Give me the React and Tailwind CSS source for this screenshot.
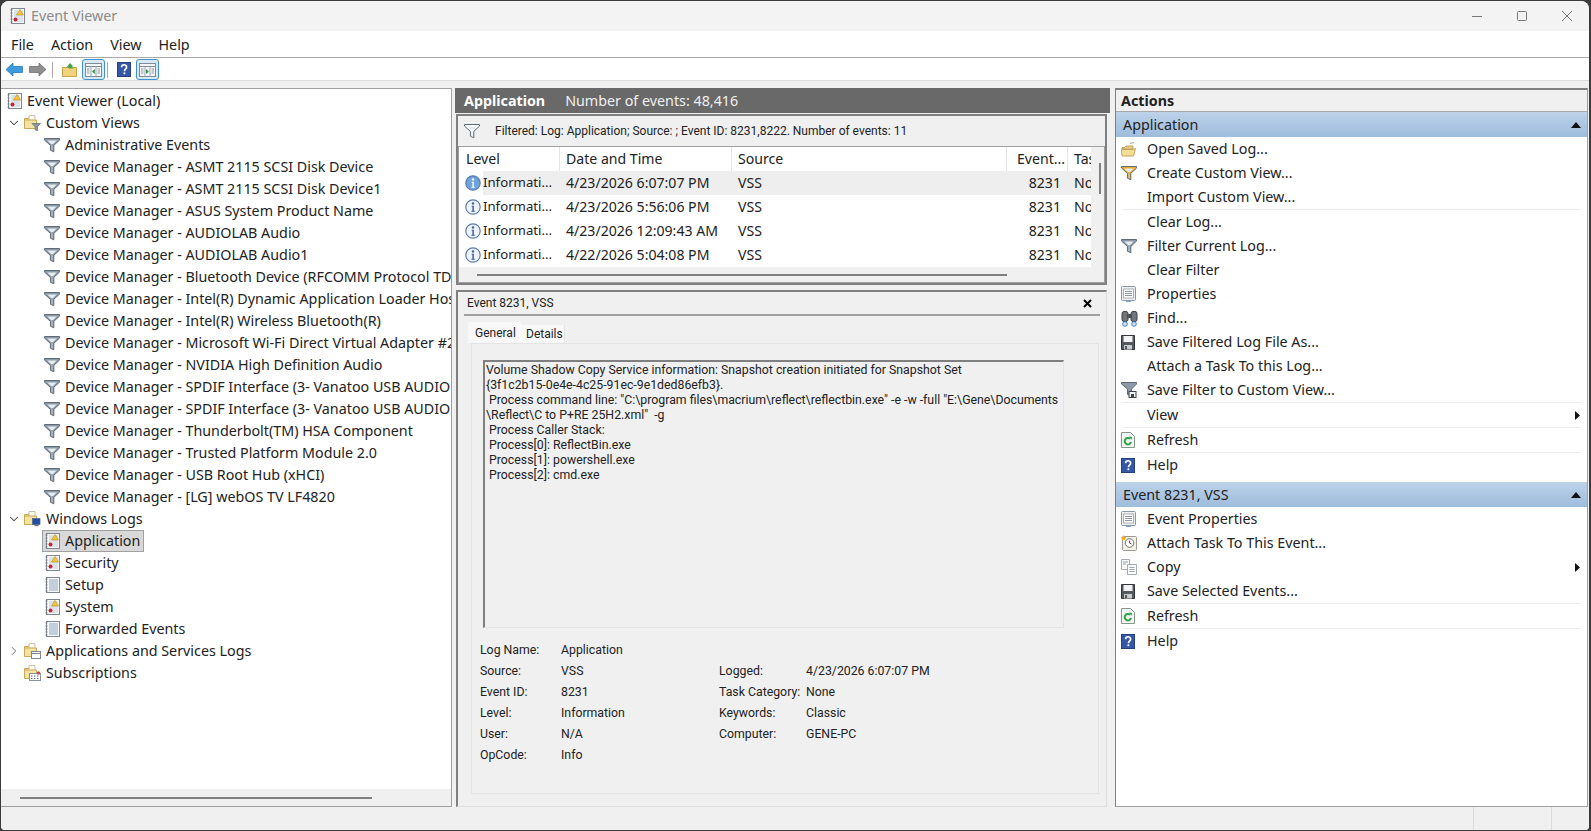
import { ChevronDown, ChevronRight } from 'lucide-react';

const FilterIcon = ({ tint = '#8a9aa8' }) => (
  <svg width="16" height="16" viewBox="0 0 16 16" className="shrink-0">
    <path d="M.5 1.5h15v1.6L9.8 8.4v6.4l-3.4-1.6V8.4L.5 3.1z" fill={tint} stroke="#5f6b75" strokeWidth="1" />
    <path d="M3.2 3.4h9.6L8.8 7.2H7.2z" fill="#e8edf1" />
    <path d="M7.6 8.6h.8v4.6h-.8z" fill="#cdd5db" />
  </svg>
);

const LogIcon = ({ plain = false }) => (
  <svg width="15" height="16" viewBox="0 0 15 16" className="shrink-0">
    <rect x="1.5" y=".5" width="13" height="15" fill="#f7f8fa" stroke="#7e8792" />
    <path d="M.5 2h2M.5 5h2M.5 8h2M.5 11h2M.5 14h2" stroke="#6f7782" />
    <path d="M4 3h9M4 5h9M4 7h9M4 9h9M4 11h9M4 13h9" stroke={plain ? '#8fa5bd' : '#c3ccd6'} />
    {!plain && (
      <>
        <path d="M10 1.5l3.5 5.5h-7z" fill="#f2c63d" stroke="#b98a13" strokeWidth=".6" />
        <circle cx="5.5" cy="11.5" r="2" fill="#c2263c" />
      </>
    )}
  </svg>
);

const FolderIcon = ({ badge }) => (
  <svg width="17" height="16" viewBox="0 0 17 16" className="shrink-0">
    <path d="M.5 3.5h4l1-2h5v11H.5z" fill="#f3d98a" stroke="#c8a955" />
    <path d="M5 .5h6v6H5z" fill="#fdfbf2" stroke="#c9c3ad" />
    <path d="M.5 5h12v8.5H.5z" fill="#f6e2a0" stroke="#c8a955" />
    {badge === 'filter' && <path d="M8 8.5h8.5l-3 3.2v4l-2.4-1v-3z" fill="#8b98a3" stroke="#5d6872" strokeWidth=".7" />}
    {badge === 'monitor' && (
      <>
        <rect x="8.5" y="7.5" width="7.5" height="6" fill="#1f4fa8" stroke="#4c5f85" strokeWidth=".7" />
        <path d="M10.5 14.5h4" stroke="#6a7890" strokeWidth="1.4" />
      </>
    )}
    {badge === 'window' && (
      <>
        <rect x="7.5" y="8.5" width="9" height="7" fill="#fff" stroke="#7d8791" />
        <path d="M7.5 10.5h9" stroke="#7d8791" />
      </>
    )}
    {badge === 'calendar' && (
      <>
        <rect x="5.5" y="8.5" width="11" height="7" fill="#fff" stroke="#8a929b" />
        <path d="M7 11h1.4M10 11h1.4M13 11h1.4M7 13.5h1.4M10 13.5h1.4M13 13.5h1.4" stroke="#5a6f8c" />
        <circle cx="14.5" cy="8" r="1.7" fill="#d0423f" />
      </>
    )}
  </svg>
);

const HelpIcon = () => (
  <svg width="14" height="15" viewBox="0 0 14 15" className="shrink-0">
    <rect x=".5" y=".5" width="13" height="14" fill="#3557a8" stroke="#25407f" />
    <path d="M4.6 5.2c0-3.2 5-3.2 5 0 0 1.8-2.2 2-2.2 4" fill="none" stroke="#fff" strokeWidth="1.6" />
    <rect x="6.5" y="10.4" width="1.8" height="1.8" fill="#fff" />
  </svg>
);

const RefreshIcon = () => (
  <svg width="14" height="16" viewBox="0 0 14 16" className="shrink-0">
    <path d="M.5.5h9l4 4v11H.5z" fill="#f5f7f5" stroke="#8a948c" />
    <path d="M10 10a3.2 3.2 0 1 1-1-3.2" fill="none" stroke="#2ca243" strokeWidth="2" />
    <path d="M8 4.6l3 .4-.6 3z" fill="#2ca243" />
  </svg>
);

const PropertiesIcon = () => (
  <svg width="15" height="16" viewBox="0 0 15 16" className="shrink-0">
    <rect x=".5" y=".5" width="14" height="14" rx="1" fill="#eef1f4" stroke="#8c96a0" />
    <rect x="2.5" y="3" width="10" height="9" fill="#fff" stroke="#a8b0b8" />
    <path d="M4 5.5h7M4 7.5h7M4 9.5h7" stroke="#8e99a4" />
    <path d="M5 15.5h5" stroke="#7aa7cf" />
  </svg>
);

const BinocularsIcon = () => (
  <svg width="17" height="17" viewBox="0 0 17 17" className="shrink-0">
    <rect x="1" y="1.5" width="6" height="10" rx="2" fill="#70757b" stroke="#3c4046" />
    <rect x="10" y="1.5" width="6" height="10" rx="2" fill="#70757b" stroke="#3c4046" />
    <path d="M6 4h5v4H6z" fill="#4a4e54" />
    <circle cx="4" cy="14" r="2.3" fill="#cfe4f6" stroke="#3c82c4" />
    <circle cx="13" cy="14" r="2.3" fill="#cfe4f6" stroke="#3c82c4" />
  </svg>
);

const SaveIcon = () => (
  <svg width="14" height="15" viewBox="0 0 14 15" className="shrink-0">
    <path d="M.5.5h13v14H.5z" fill="#55595f" stroke="#34373b" />
    <rect x="2.5" y="1" width="9" height="6" fill="#f2f3f4" />
    <rect x="3" y="10" width="8" height="4.5" fill="#c9ccd0" />
    <rect x="4" y="11" width="2" height="3" fill="#55595f" />
  </svg>
);

const SaveFilterIcon = () => (
  <svg width="16" height="16" viewBox="0 0 16 16" className="shrink-0">
    <path d="M.5 .5h15v1.5l-5 5v7l-4-1.5V7L.5 2z" fill="#8a9aa8" stroke="#5f6b75" />
    <rect x="8" y="9.5" width="7" height="6" fill="#f3f4f5" stroke="#40444a" />
    <rect x="10" y="12" width="3" height="3" fill="#40444a" />
  </svg>
);

const OpenFolderIcon = () => (
  <svg width="15" height="15" viewBox="0 0 15 15" className="shrink-0">
    <path d="M9 1.5l4-1" stroke="#a9a59a" />
    <path d="M1 5.5h3l1-1.5h7v3H1z" fill="#e7cf8a" stroke="#bfa35c" />
    <path d="M.5 7.5h11.5l2.5-1-2 7.5H1z" fill="#f6dd95" stroke="#c3a55a" />
  </svg>
);

const TaskIcon = () => (
  <svg width="16" height="16" viewBox="0 0 16 16" className="shrink-0">
    <rect x="1.5" y="1.5" width="14" height="14" rx="1" fill="#f1f0ea" stroke="#9a9a94" />
    <circle cx="8.5" cy="8" r="4.3" fill="#fff" stroke="#77736a" />
    <path d="M8.5 5.5V8l2 1" fill="none" stroke="#55534c" />
    <path d="M2.5 0l1 2 2 .3-1.5 1.4.4 2L2.5 4.6.6 5.7l.4-2L-.5 2.3l2-.3z" fill="#efa926" />
  </svg>
);

const CopyIcon = () => (
  <svg width="16" height="16" viewBox="0 0 16 16" className="shrink-0">
    <path d="M.5.5h8v10h-8z" fill="#f7f8f9" stroke="#a4abb2" />
    <path d="M6.5 5.5h9v10h-9z" fill="#fff" stroke="#a4abb2" />
    <path d="M2 3h5M2 5h3M8.5 8.5h5M8.5 10.5h5M8.5 12.5h5" stroke="#9aa5b0" />
  </svg>
);

const InfoIcon = ({ active }) => (
  <svg width="16" height="16" viewBox="0 0 16 16" className="shrink-0">
    <circle cx="8" cy="8" r="7.2" fill={active ? '#6ea3dc' : '#eef3f9'} stroke="#5b7ba8" strokeWidth="1.2" />
    <circle cx="8" cy="4.4" r="1.2" fill={active ? '#fff' : '#2d5aa0'} />
    <path d="M6.6 6.8h2.2v5h1v1H6.4v-1h1V7.8h-.8z" fill={active ? '#fff' : '#2d5aa0'} />
  </svg>
);

const PaneButton = ({ side }) => (
  <div className="w-[23px] h-[21px] rounded-[3px] border border-[#3f90cf] bg-[#d7e8f7] flex items-center justify-center">
    <svg width="17" height="14" viewBox="0 0 17 14">
      <rect x=".5" y=".5" width="16" height="13" fill="#f4f6f8" stroke="#7f8a95" />
      <path d="M.5 3.5h16" stroke="#7f8a95" />
      <path d="M6 3.5v10M11 3.5v10" stroke="#a2abb4" />
      {side === 'left' && <path d="M9.8 6l-2.8 2.5 2.8 2.5z" fill="#2f8f45" />}
      {side === 'right' && <path d="M7 6l2.8 2.5L7 11z" fill="#2f8f45" />}
      <path d="M2 6h2.5M2 8h2.5M2 10h2.5M12.5 6H15M12.5 8H15M12.5 10H15" stroke="#8f9aa5" />
    </svg>
  </div>
);

const customViews = [
  'Administrative Events',
  'Device Manager - ASMT 2115 SCSI Disk Device',
  'Device Manager - ASMT 2115 SCSI Disk Device1',
  'Device Manager - ASUS System Product Name',
  'Device Manager - AUDIOLAB Audio',
  'Device Manager - AUDIOLAB Audio1',
  'Device Manager - Bluetooth Device (RFCOMM Protocol TDI)',
  'Device Manager - Intel(R) Dynamic Application Loader Host Interface',
  'Device Manager - Intel(R) Wireless Bluetooth(R)',
  'Device Manager - Microsoft Wi-Fi Direct Virtual Adapter #2',
  'Device Manager - NVIDIA High Definition Audio',
  'Device Manager - SPDIF Interface (3- Vanatoo USB AUDIO 2.0)',
  'Device Manager - SPDIF Interface (3- Vanatoo USB AUDIO 2.0)',
  'Device Manager - Thunderbolt(TM) HSA Component',
  'Device Manager - Trusted Platform Module 2.0',
  'Device Manager - USB Root Hub (xHCI)',
  'Device Manager - [LG] webOS TV LF4820',
];

const windowsLogs = [
  { name: 'Application', selected: true },
  { name: 'Security' },
  { name: 'Setup', plain: true },
  { name: 'System' },
  { name: 'Forwarded Events', plain: true },
];

const events = [
  ['4/23/2026 6:07:07 PM', true],
  ['4/23/2026 5:56:06 PM', false],
  ['4/23/2026 12:09:43 AM', false],
  ['4/22/2026 5:04:08 PM', false],
];

const eventMessage = [
  'Volume Shadow Copy Service information: Snapshot creation initiated for Snapshot Set',
  '{3f1c2b15-0e4e-4c25-91ec-9e1ded86efb3}.',
  ' Process command line: "C:\\program files\\macrium\\reflect\\reflectbin.exe" -e -w -full "E:\\Gene\\Documents',
  '\\Reflect\\C to P+RE 25H2.xml"  -g',
  ' Process Caller Stack:',
  ' Process[0]: ReflectBin.exe',
  ' Process[1]: powershell.exe',
  ' Process[2]: cmd.exe',
];

const fieldRows = [
  ['Log Name:', 'Application', '', ''],
  ['Source:', 'VSS', 'Logged:', '4/23/2026 6:07:07 PM'],
  ['Event ID:', '8231', 'Task Category:', 'None'],
  ['Level:', 'Information', 'Keywords:', 'Classic'],
  ['User:', 'N/A', 'Computer:', 'GENE-PC'],
  ['OpCode:', 'Info', '', ''],
];

const appActions = [
  { label: 'Open Saved Log...', icon: <OpenFolderIcon /> },
  { label: 'Create Custom View...', icon: <FilterIcon tint="#e9a92c" /> },
  { label: 'Import Custom View...', sep: 'thin' },
  { label: 'Clear Log...' },
  { label: 'Filter Current Log...', icon: <FilterIcon /> },
  { label: 'Clear Filter' },
  { label: 'Properties', icon: <PropertiesIcon /> },
  { label: 'Find...', icon: <BinocularsIcon /> },
  { label: 'Save Filtered Log File As...', icon: <SaveIcon /> },
  { label: 'Attach a Task To this Log...' },
  { label: 'Save Filter to Custom View...', icon: <SaveFilterIcon />, sep: 'thin' },
  { label: 'View', submenu: true, sep: 'thin' },
  { label: 'Refresh', icon: <RefreshIcon />, sep: 'thin' },
  { label: 'Help', icon: <HelpIcon /> },
];

const eventActions = [
  { label: 'Event Properties', icon: <PropertiesIcon /> },
  { label: 'Attach Task To This Event...', icon: <TaskIcon /> },
  { label: 'Copy', icon: <CopyIcon />, submenu: true },
  { label: 'Save Selected Events...', icon: <SaveIcon />, sep: 'thin' },
  { label: 'Refresh', icon: <RefreshIcon />, sep: 'thin' },
  { label: 'Help', icon: <HelpIcon /> },
];

function TreeRow({ indent, chevron, icon, children, selected }) {
  return (
    <div className={`h-[22px] flex items-center whitespace-nowrap ${indent}`}>
      {chevron !== undefined && (
        <span className="w-[20px] shrink-0 flex justify-center text-[#444]">
          {chevron === 'down' && <ChevronDown size={14} strokeWidth={1.8} />}
          {chevron === 'right' && <ChevronRight size={14} strokeWidth={1.8} className="text-[#888]" />}
        </span>
      )}
      <span className={selected ? 'flex items-center gap-[5px] h-[22px] pl-[2px] pr-[3px] ml-[-3px] bg-[#d9d9d9] border border-[#a0a0a0]' : 'flex items-center gap-[5px]'}>
        {icon}
        <span>{children}</span>
      </span>
    </div>
  );
}

function ActionGroup({ title, items }) {
  return (
    <>
      <div className="h-[25px] pl-[7px] pr-[6px] flex items-center justify-between bg-gradient-to-b from-[#bcd2e9] to-[#9ebcdc]">
        <span>{title}</span>
        <svg width="10" height="6" viewBox="0 0 10 6"><path d="M5 0l5 6H0z" fill="#111" /></svg>
      </div>
      {items.map((item) => (
        <div key={item.label}>
          <div className="h-[24px] flex items-center pl-[5px] pr-[7px]">
            <span className="w-[26px] flex items-center shrink-0">{item.icon}</span>
            <span className="flex-1">{item.label}</span>
            {item.submenu && <svg width="5" height="9" viewBox="0 0 5 9"><path d="M0 0l5 4.5L0 9z" fill="#111" /></svg>}
          </div>
          {item.sep === 'thin' && <div className="h-px mx-[6px] bg-[#ececec]" />}
        </div>
      ))}
    </>
  );
}

export default function App() {
  return (
    <div className="w-[1591px] h-[831px] bg-[#3b3b3b] pt-px pl-px pr-[2px] pb-px overflow-hidden">
      <div className="h-full flex flex-col rounded-t-[8px] rounded-b-[4px] overflow-hidden bg-[#f0f0f0] text-[#222] text-[14.3px] font-['Noto_Sans','Open_Sans',sans-serif]">
        {/* Title bar */}
        <div className="h-[30px] shrink-0 bg-[#f3f3f3] flex items-center pl-[9px] text-[#8a8a8a]">
          <LogIcon />
          <span className="ml-[6px]">Event Viewer</span>
          <div className="ml-auto flex items-center gap-[35px] pr-[17px] text-[#777]">
            <svg width="10" height="10" viewBox="0 0 10 10"><path d="M0 5.5h10" stroke="#777" /></svg>
            <svg width="10" height="10" viewBox="0 0 10 10"><rect x=".5" y=".5" width="9" height="9" rx="1" fill="none" stroke="#777" /></svg>
            <svg width="10" height="10" viewBox="0 0 10 10"><path d="M0 0l10 10M10 0L0 10" stroke="#777" /></svg>
          </div>
        </div>

        {/* Menu bar */}
        <div className="h-[27px] shrink-0 pt-px bg-white border-b border-[#a8a8a8] flex items-center pl-[10px] gap-[17px]">
          <span>File</span>
          <span>Action</span>
          <span>View</span>
          <span>Help</span>
        </div>

        {/* Toolbar */}
        <div className="h-[23px] shrink-0 pt-px bg-white border-b border-[#dcdcdc] flex items-center pl-[5px]">
          <svg width="17" height="13" viewBox="0 0 17 13"><path d="M7 0v3.5h9.5v6H7V13L0 6.5z" fill="#3d9be0" stroke="#1f6fb0" strokeWidth=".7" /></svg>
          <svg width="17" height="13" viewBox="0 0 17 13" className="ml-[6px]"><path d="M10 0v3.5H.5v6H10V13l7-6.5z" fill="#8f8f8f" stroke="#666" strokeWidth=".7" /></svg>
          <div className="w-px h-[16px] bg-[#a8a8a8] ml-[6px]" />
          <svg width="15" height="15" viewBox="0 0 15 15" className="ml-[9px]">
            <path d="M.5 5.5h14v9H.5z" fill="#f2d37c" stroke="#c6a24d" />
            <path d="M4 6l4-5 3 3-1 1 1.5 1.5H7L6 5z" fill="#46a54a" />
          </svg>
          <div className="ml-[5px]"><PaneButton side="left" /></div>
          <div className="w-px h-[16px] bg-[#a8a8a8] ml-[2px]" />
          <div className="ml-[9px]"><HelpIcon /></div>
          <div className="ml-[5px]"><PaneButton side="right" /></div>
        </div>

        {/* Panes */}
        <div className="flex-1 min-h-0 flex pt-[7px]">
          {/* Tree */}
          <div className="w-[451px] shrink-0 bg-white border-t border-r border-b border-[#a0a0a0] flex flex-col overflow-hidden">
            <div className="flex-1 pt-px overflow-hidden">
              <TreeRow indent="pl-[6px]" icon={<LogIcon />}>Event Viewer (Local)</TreeRow>
              <TreeRow indent="pl-[3px]" chevron="down" icon={<FolderIcon badge="filter" />}>Custom Views</TreeRow>
              {customViews.map((name, i) => (
                <TreeRow key={name + i} indent="pl-[43px]" icon={<FilterIcon />}>{name}</TreeRow>
              ))}
              <TreeRow indent="pl-[3px]" chevron="down" icon={<FolderIcon badge="monitor" />}>Windows Logs</TreeRow>
              {windowsLogs.map((log) => (
                <TreeRow key={log.name} indent="pl-[44px]" selected={log.selected} icon={<LogIcon plain={log.plain} />}>{log.name}</TreeRow>
              ))}
              <TreeRow indent="pl-[3px]" chevron="right" icon={<FolderIcon badge="window" />}>Applications and Services Logs</TreeRow>
              <TreeRow indent="pl-[3px]" chevron="" icon={<FolderIcon badge="calendar" />}>Subscriptions</TreeRow>
            </div>
            <div className="h-[17px] shrink-0 bg-[#f0f0f0] flex items-center pl-[19px]">
              <div className="w-[352px] h-[2px] bg-[#808080]" />
            </div>
          </div>

          {/* Centre */}
          <div className="w-[655px] shrink-0 ml-[3px] flex flex-col">
            <div className="h-[25px] shrink-0 bg-[#696969] text-white flex items-center pl-[9px]">
              <span className="font-bold">Application</span>
              <span className="ml-[20px] text-[#f0f0f0]">Number of events: 48,416</span>
            </div>
            <div className="h-[171px] shrink-0 mt-px mr-[3px] ml-px border-2 border-[#808080] bg-[#f0f0f0] flex flex-col">
              <div className="h-[30px] shrink-0 flex items-center pl-[6px] text-[12px] font-['Roboto',sans-serif]">
                <FilterIcon tint="#ffffff" />
                <span className="ml-[15px]">Filtered: Log: Application; Source: ; Event ID: 8231,8222. Number of events: 11</span>
              </div>
              <div className="flex-1 min-h-0 flex border border-[#a0a0a0] bg-white text-[14.1px]">
                <div className="w-[632px] shrink-0 flex flex-col">
                  <div className="h-[24px] shrink-0 flex items-center">
                    <div className="w-[101px] h-full pl-[7px] flex items-center border-r border-[#e5e5e5]">Level</div>
                    <div className="w-[172px] h-full pl-[6px] flex items-center border-r border-[#e5e5e5]">Date and Time</div>
                    <div className="w-[275px] h-full pl-[6px] flex items-center border-r border-[#e5e5e5]">Source</div>
                    <div className="w-[61px] h-full pl-[10px] flex items-center border-r border-[#e5e5e5]">Event...</div>
                    <div className="w-[23px] h-full pl-[6px] flex items-center overflow-hidden">Task</div>
                  </div>
                  {events.map(([when, active]) => (
                    <div key={when} className="h-[24px] shrink-0 flex items-center">
                      <div className="w-[101px] h-full shrink-0 pl-[6px] flex items-center">
                        <InfoIcon active={active} />
                        <span className={`ml-[2px] w-[79px] h-full flex items-center text-[13.2px] ${active ? 'bg-[#eeeeee]' : ''}`}>Informati...</span>
                      </div>
                      <div className={`flex-1 h-full flex items-center ${active ? 'bg-[#eeeeee]' : ''}`}>
                        <div className="w-[172px] pl-[6px]">{when}</div>
                        <div className="w-[275px] pl-[6px]">VSS</div>
                        <div className="w-[61px] pr-[7px] text-right">8231</div>
                        <div className="w-[23px] pl-[6px] overflow-hidden">None</div>
                      </div>
                    </div>
                  ))}
                  <div className="flex-1 bg-[#f0f0f0] flex items-center pl-[18px]">
                    <div className="w-[530px] h-[2px] bg-[#808080]" />
                  </div>
                </div>
                <div className="flex-1 bg-[#f0f0f0] pt-[16px] pl-[8px]">
                  <div className="w-[2px] h-[31px] bg-[#808080]" />
                </div>
              </div>
            </div>

            <div className="flex-1 min-h-0 mt-[5px] mr-[3px] ml-px border-t-2 border-l-2 border-[#808080] border-r border-b border-r-[#dedede] border-b-[#dedede] bg-[#f0f0f0] flex flex-col text-[12px] font-['Roboto',sans-serif]">
              <div className="h-[24px] shrink-0 mx-[6px] border-b-2 border-[#a0a0a0] flex items-center justify-between pl-[3px] pr-[8px]">
                <span>Event 8231, VSS</span>
                <svg width="9" height="9" viewBox="0 0 9 9"><path d="M1 1l7 7M8 1L1 8" stroke="#000" strokeWidth="2" /></svg>
              </div>
              <div className="flex pl-[10px] mt-[6px] h-[21px] shrink-0 items-end">
                <div className="w-[53px] h-[21px] bg-[#f8f8f8] flex items-center pl-[7px]">General</div>
                <div className="w-[44px] h-[18px] bg-[#f8f8f8] border-r border-[#e4e4e4] flex items-center pl-[5px]">Details</div>
              </div>
              <div className="flex-1 ml-[13px] mb-[12px] mr-[7px] border border-[#e4e4e4] pt-[16px] pl-[8px]">
                <div className="ml-[3px] w-[581px] h-[268px] border-l-2 border-t-2 border-[#808080] border-r border-b border-r-[#e4e4e4] border-b-[#e4e4e4] pl-px pt-px leading-[15px] text-[12.3px] whitespace-pre">
                  {eventMessage.map((line) => (
                    <div key={line} className="h-[15px]">{line}</div>
                  ))}
                </div>
                <div className="mt-[12px] text-[12.3px]">
                  {fieldRows.map(([k1, v1, k2, v2]) => (
                    <div key={k1} className="h-[21px] flex items-center">
                      <div className="w-[81px]">{k1}</div>
                      <div className="w-[158px]">{v1}</div>
                      <div className="w-[87px]">{k2}</div>
                      <div>{v2}</div>
                    </div>
                  ))}
                </div>
              </div>
            </div>
          </div>

          {/* Actions */}
          <div className="flex-1 min-w-0 ml-[5px] mr-px bg-white border-t-2 border-l border-[#808080] border-r border-b border-r-[#a0a0a0] border-b-[#a0a0a0] flex flex-col">
            <div className="h-[22px] shrink-0 bg-[#f0f0f0] border-b border-[#a8a8a8] flex items-center pl-[5px] font-bold">Actions</div>
            <ActionGroup title="Application" items={appActions} />
            <div className="h-[5px] shrink-0" />
            <ActionGroup title="Event 8231, VSS" items={eventActions} />
          </div>
        </div>

        {/* Status bar */}
        <div className="h-[23px] shrink-0 bg-[#f0f0f0] flex justify-end">
          <div className="w-[78px] border-l border-[#dcdcdc]" />
          <div className="w-[38px] border-l border-[#dcdcdc]" />
        </div>
      </div>
    </div>
  );
}
